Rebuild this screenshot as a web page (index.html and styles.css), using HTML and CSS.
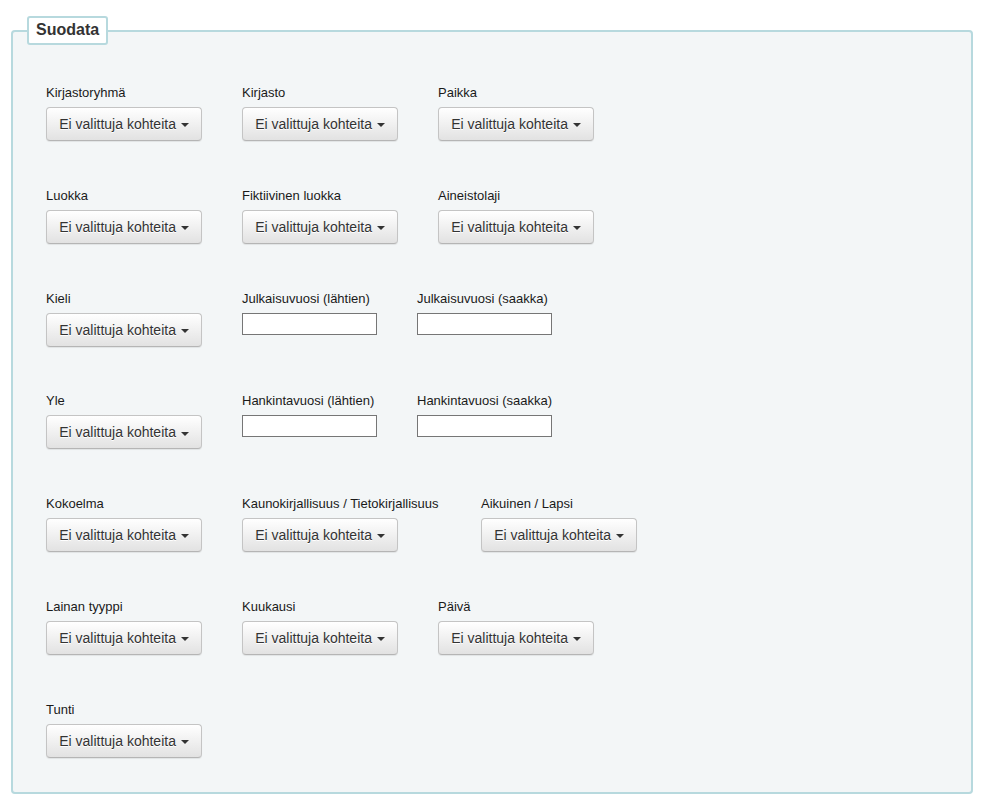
FILE: index.html
```html
<!DOCTYPE html>
<html lang="fi">
<head>
<meta charset="utf-8">
<title>Suodata</title>
<link rel="stylesheet" href="styles.css">
</head>
<body>
<div class="page">
  <fieldset class="filter">
    <legend class="filter-legend">Suodata</legend>
    <div class="filter-body">
      <div class="row">
        <div class="item"><label class="lbl">Kirjastoryhmä</label><button class="btn">Ei valittuja kohteita <span class="caret"></span></button></div>
        <div class="item"><label class="lbl">Kirjasto</label><button class="btn">Ei valittuja kohteita <span class="caret"></span></button></div>
        <div class="item"><label class="lbl">Paikka</label><button class="btn">Ei valittuja kohteita <span class="caret"></span></button></div>
      </div>
      <div class="row">
        <div class="item"><label class="lbl">Luokka</label><button class="btn">Ei valittuja kohteita <span class="caret"></span></button></div>
        <div class="item"><label class="lbl">Fiktiivinen luokka</label><button class="btn">Ei valittuja kohteita <span class="caret"></span></button></div>
        <div class="item"><label class="lbl">Aineistolaji</label><button class="btn">Ei valittuja kohteita <span class="caret"></span></button></div>
      </div>
      <div class="row">
        <div class="item"><label class="lbl">Kieli</label><button class="btn">Ei valittuja kohteita <span class="caret"></span></button></div>
        <div class="item"><label class="lbl">Julkaisuvuosi (lähtien)</label><input class="txt" type="text"></div>
        <div class="item"><label class="lbl">Julkaisuvuosi (saakka)</label><input class="txt" type="text"></div>
      </div>
      <div class="row">
        <div class="item"><label class="lbl">Yle</label><button class="btn">Ei valittuja kohteita <span class="caret"></span></button></div>
        <div class="item"><label class="lbl">Hankintavuosi (lähtien)</label><input class="txt" type="text"></div>
        <div class="item"><label class="lbl">Hankintavuosi (saakka)</label><input class="txt" type="text"></div>
      </div>
      <div class="row">
        <div class="item"><label class="lbl">Kokoelma</label><button class="btn">Ei valittuja kohteita <span class="caret"></span></button></div>
        <div class="item item-wide"><label class="lbl">Kaunokirjallisuus / Tietokirjallisuus</label><button class="btn">Ei valittuja kohteita <span class="caret"></span></button></div>
        <div class="item"><label class="lbl">Aikuinen / Lapsi</label><button class="btn">Ei valittuja kohteita <span class="caret"></span></button></div>
      </div>
      <div class="row">
        <div class="item"><label class="lbl">Lainan tyyppi</label><button class="btn">Ei valittuja kohteita <span class="caret"></span></button></div>
        <div class="item"><label class="lbl">Kuukausi</label><button class="btn">Ei valittuja kohteita <span class="caret"></span></button></div>
        <div class="item"><label class="lbl">Päivä</label><button class="btn">Ei valittuja kohteita <span class="caret"></span></button></div>
      </div>
      <div class="row">
        <div class="item"><label class="lbl">Tunti</label><button class="btn">Ei valittuja kohteita <span class="caret"></span></button></div>
      </div>
    </div>
  </fieldset>
</div>
</body>
</html>
```

FILE: styles.css
```css
html, body {
  margin: 0;
  padding: 0;
  background: #ffffff;
  font-family: "Liberation Sans", Arial, sans-serif;
  color: #222;
}

.page {
  padding: 16px 15px 0 11px;
}

.filter {
  margin: 0;
  padding: 0;
  border: 2px solid #b7d9de;
  border-radius: 4px;
  background: #f3f6f7;
  min-width: 0;
}

.filter-legend {
  margin-left: 14px;
  padding: 3px 7px 4px;
  border: 2px solid #b7d9de;
  border-radius: 3px;
  background: #ffffff;
  font-size: 16px;
  line-height: 18px;
  font-weight: bold;
  color: #333;
}

.filter-body {
  padding: 39px 20px 34px 33px;
  display: flex;
  flex-direction: column;
  gap: 45.8px;
}

.row {
  display: flex;
  align-items: flex-start;
  gap: 40px;
}

.item {
  display: flex;
  flex-direction: column;
  align-items: flex-start;
}

.item-wide {
  min-width: 199px;
}

.lbl {
  display: block;
  font-size: 13px;
  line-height: 18px;
  margin-bottom: 5px;
  color: #1a1a1a;
}

.btn {
  box-sizing: border-box;
  width: 156px;
  height: 34px;
  padding: 0 12px;
  border: 1px solid #c4c4c4;
  border-bottom-color: #b5b5b5;
  border-radius: 4px;
  background: linear-gradient(to bottom, #ffffff 0%, #e2e2e2 100%);
  box-shadow: inset 0 1px 0 rgba(255,255,255,.15), 0 1px 1px rgba(0,0,0,.075);
  font-family: "Liberation Sans", Arial, sans-serif;
  font-size: 14px;
  color: #333;
  text-shadow: 0 1px 0 #fff;
  white-space: nowrap;
  cursor: pointer;
}

.caret {
  display: inline-block;
  width: 0;
  height: 0;
  margin-left: 1px;
  vertical-align: middle;
  border-top: 4px solid #333;
  border-left: 4px solid transparent;
  border-right: 4px solid transparent;
}

.txt {
  box-sizing: border-box;
  width: 135px;
  height: 22px;
  margin: 0;
  padding: 1px 2px;
  border: 1px solid #767676;
  border-radius: 0;
  background: #fff;
  font-size: 13px;
}
```
